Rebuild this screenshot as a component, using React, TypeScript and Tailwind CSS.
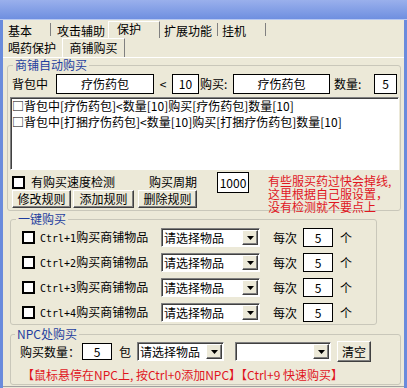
import React from "react";

function Check({ className = "" }: { className?: string }) {
  return <div className={"w-[13px] h-[13px] border-2 border-black bg-white shrink-0 " + className} />;
}

function Btn({ className = "", children }: { className?: string; children?: React.ReactNode }) {
  return (
    <div
      className={
        "bg-[#ECE9D8] border border-t-white border-l-white border-b-[#404040] border-r-[#404040] shadow-[inset_-1px_-1px_0_#808080] flex items-center justify-center whitespace-nowrap shrink-0 " +
        className
      }
    >
      {children}
    </div>
  );
}

function Select({ className = "", text = "" }: { className?: string; text?: string }) {
  return (
    <div
      className={
        "h-[19px] flex bg-white border border-t-[#808080] border-l-[#808080] border-b-white border-r-white shadow-[inset_1px_1px_0_#404040] shrink-0 " +
        className
      }
    >
      <div className="flex-1 pl-[2px] pt-[1px] leading-[16px] overflow-hidden whitespace-nowrap">{text}</div>
      <div className="w-[16px] h-[15px] mt-[1px] mr-[1px] bg-[#ECE9D8] border border-t-white border-l-white border-b-[#404040] border-r-[#404040] shadow-[inset_-1px_-1px_0_#808080] flex items-center justify-center">
        <svg width="7" height="4" viewBox="0 0 7 4">
          <path d="M0 0h7L3.5 4z" fill="#000" />
        </svg>
      </div>
    </div>
  );
}

function CtrlRow({ n }: { n: string }) {
  return (
    <div className="flex items-center h-[19px] pl-[11px]">
      <Check />
      <span className="ml-[5px] w-[121px] whitespace-nowrap shrink-0">
        <span className="font-['DejaVu_Sans_Mono',monospace] text-[10px]">Ctrl+{n}</span>
        购买商铺物品
      </span>
      <Select className="w-[99px]" text="请选择物品" />
      <span className="ml-[13px] whitespace-nowrap">每次</span>
      <div className="ml-[6px] w-[30px] h-[19px] border border-black bg-white flex items-center justify-center shrink-0">5</div>
      <span className="ml-[7px]">个</span>
    </div>
  );
}

export default function App() {
  return (
    <div className="w-[407px] h-[388px] overflow-hidden bg-[#6a8bdc] font-['Noto_Sans_CJK_SC',sans-serif] text-[12px] text-black leading-[14px]">
      <div className="h-[20px] bg-gradient-to-b from-[#9ab0ec] to-[#6f8fe0] border-b border-[#b8c8f0]" />
      <div className="ml-[3px] w-[401px] h-[368px] bg-[#ECE9D8] flex flex-col">
        {/* tab row 1 */}
        <div className="flex h-[17px] mt-[1px] items-end">
          <div className="w-[47px] pl-[5px] whitespace-nowrap">基本</div>
          <div className="w-px h-[13px] mb-[2px] bg-[#808080]" />
          <div className="w-[57px] pl-[6px] whitespace-nowrap">攻击辅助</div>
          <div className="w-[52px] h-[17px] pl-[8px] pb-[2px] flex items-end border-l border-t border-l-white border-t-white border-r border-r-[#808080] whitespace-nowrap">保护</div>
          <div className="w-[57px] pl-[4px] whitespace-nowrap">扩展功能</div>
          <div className="w-px h-[13px] mb-[2px] bg-[#808080]" />
          <div className="w-[47px] pl-[4px] whitespace-nowrap">挂机</div>
          <div className="w-px h-[13px] mb-[2px] bg-[#808080]" />
        </div>
        {/* tab row 2 */}
        <div className="flex h-[19px] items-center">
          <div className="w-[59px] pl-[5px] whitespace-nowrap">喝药保护</div>
          <div className="w-[63px] h-[19px] flex items-center justify-center border-l border-t border-l-white border-t-white border-r border-r-[#808080] whitespace-nowrap">商铺购买</div>
        </div>
        {/* page */}
        <div className="border-t border-white flex flex-col">
          {/* group 1 */}
          <fieldset className="ml-[4px] w-[394px] border border-[#c9c7ba] rounded-[3px] flex flex-col">
            <legend className="ml-[5px] px-[2px] text-[#1f3e9e] leading-[14px]">商铺自动购买</legend>
            <div className="flex items-center h-[20px] mt-[2px] pl-[4px]">
              <span className="w-[44px] whitespace-nowrap">背包中</span>
              <div className="w-[98px] h-[20px] border border-black bg-white flex items-center justify-center">疗伤药包</div>
              <span className="w-[18px] text-center">&lt;</span>
              <div className="w-[27px] h-[20px] border border-black bg-white flex items-center justify-center">10</div>
              <span className="w-[34px] pl-[1px] whitespace-nowrap">购买:</span>
              <div className="w-[97px] h-[20px] border border-black bg-white flex items-center justify-center">疗伤药包</div>
              <span className="w-[44px] pl-[4px] whitespace-nowrap">数量:</span>
              <div className="w-[23px] h-[20px] border border-black bg-white flex items-center justify-center">5</div>
            </div>
            <div className="ml-[2px] mt-[3px] w-[389px] h-[73px] bg-white border border-t-[#808080] border-l-[#808080] border-b-white border-r-white shadow-[inset_1px_1px_0_#404040] pl-[1px] leading-[16px] whitespace-nowrap">
              <div>□背包中[疗伤药包]&lt;数量[10]购买[疗伤药包]数量[10]</div>
              <div>□背包中[打捆疗伤药包]&lt;数量[10]购买[打捆疗伤药包]数量[10]</div>
            </div>
            <div className="flex h-[38px] mt-[2px] pl-[4px]">
              <div className="w-[185px] flex flex-col shrink-0">
                <div className="mt-[3px] h-[14px] flex items-center">
                  <Check className="w-[12px] h-[12px]" />
                  <span className="ml-[6px] w-[118px] whitespace-nowrap">有购买速度检测</span>
                  <span className="whitespace-nowrap">购买周期</span>
                </div>
                <div className="mt-[1px] flex">
                  <Btn className="w-[59px] h-[18px]">修改规则</Btn>
                  <Btn className="ml-[2px] w-[61px] h-[18px]">添加规则</Btn>
                  <Btn className="ml-[4px] w-[59px] h-[18px]">删除规则</Btn>
                </div>
              </div>
              <div className="ml-[20px] w-[32px] h-[21px] border border-black bg-white flex items-center justify-center shrink-0">1000</div>
              <div className="ml-[19px] mt-[2px] text-[#e0161e] leading-[13px] whitespace-nowrap">
                <div>有些服买药过快会掉线,</div>
                <div>这里根据自己服设置，</div>
                <div>没有检测就不要点上</div>
              </div>
            </div>
          </fieldset>
          {/* group 2 */}
          <fieldset className="ml-[7px] mt-[1px] w-[367px] border border-[#c9c7ba] rounded-[3px] flex flex-col gap-[6px] pt-[2px] pb-[2px]">
            <legend className="ml-[5px] px-[2px] text-[#1f3e9e] leading-[14px]">一键购买</legend>
            <CtrlRow n="1" />
            <CtrlRow n="2" />
            <CtrlRow n="3" />
            <CtrlRow n="4" />
          </fieldset>
          {/* group 3 */}
          <fieldset className="ml-[7px] mt-[2px] w-[391px] border border-[#c9c7ba] rounded-[3px] flex flex-col pb-[2px]">
            <legend className="ml-[4px] px-[2px] text-[#1f3e9e] leading-[14px]">NPC处购买</legend>
            <div className="flex items-center h-[21px] pl-[9px]">
              <span className="w-[62px] whitespace-nowrap shrink-0">购买数量：</span>
              <div className="w-[30px] h-[17px] border border-black bg-white flex items-center justify-center shrink-0">5</div>
              <span className="ml-[7px]">包</span>
              <Select className="ml-[6px] w-[87px]" text="请选择物品" />
              <Select className="ml-[11px] w-[96px]" text="" />
              <Btn className="ml-[6px] w-[34px] h-[21px]">清空</Btn>
            </div>
            <div className="mt-[6px] pl-[11px] text-[#e0161e] whitespace-nowrap">
              【鼠标悬停在NPC上, 按Ctrl+0添加NPC】【Ctrl+9 快速购买】
            </div>
          </fieldset>
          <div className="mt-[1px] border-t border-[#a0a0a0]" />
        </div>
      </div>
    </div>
  );
}
